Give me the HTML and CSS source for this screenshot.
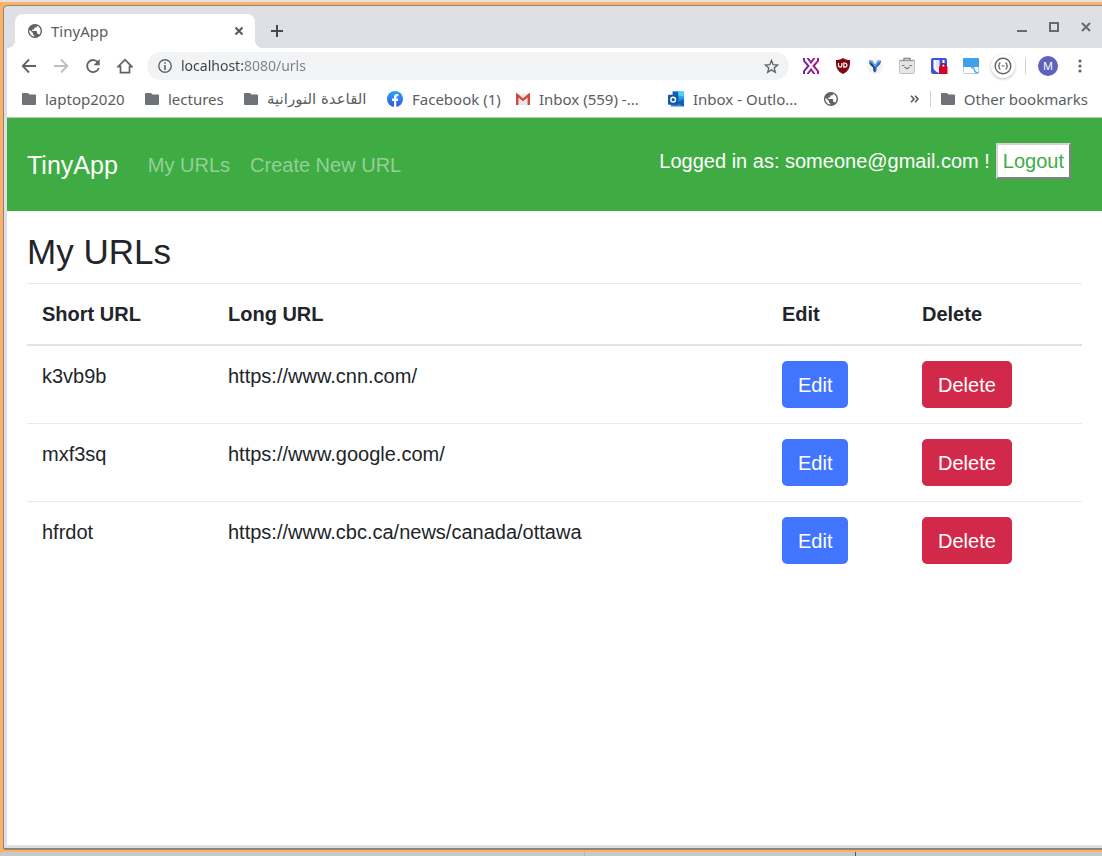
FILE: index.html
```html
<!DOCTYPE html>
<html lang="en">
<head>
<meta charset="utf-8">
<title>TinyApp</title>
<link rel="stylesheet" href="styles.css">
</head>
<body>
<svg class="sprite" aria-hidden="true">
  <symbol id="folder" viewBox="0 0 14 12"><path fill="#6f7377" d="M1 0h5l1.500 1.500H13a1 1 0 0 1 1 1V11a1 1 0 0 1-1 1H1a1 1 0 0 1-1-1V1a1 1 0 0 1 1-1z"/></symbol>
  <symbol id="globe" viewBox="2 2 20 20"><path fill="#5f6368" d="M12 2C6.480 2 2 6.480 2 12s4.480 10 10 10 10-4.480 10-10S17.520 2 12 2zm-1 17.930c-3.950-.49-7-3.850-7-7.930 0-.62.08-1.210.21-1.790L9 15v1c0 1.100.9 2 2 2v1.930zm6.900-2.540c-.26-.81-1-1.390-1.900-1.390h-1v-3c0-.55-.45-1-1-1H8v-2h2c.55 0 1-.45 1-1V7h2c1.100 0 2-.9 2-2v-.41c2.930 1.190 5 4.060 5 7.410 0 2.080-.8 3.970-2.100 5.390z"/></symbol>
</svg>
<div class="desktop">
<div class="frame">
<div class="window">
  <header class="tabstrip">
    <div class="tab">
      <svg width="14" height="14"><use href="#globe"/></svg>
      <span class="tab-title">TinyApp</span>
      <button class="icon-btn tab-close" aria-label="Close tab"><svg width="10" height="10" viewBox="0 0 10 10"><path d="M1.500 1.500l7 7M8.500 1.500l-7 7" stroke="#505357" stroke-width="1.800"/></svg></button>
    </div>
    <button class="icon-btn new-tab" aria-label="New tab"><svg width="14" height="14" viewBox="0 0 14 14"><path d="M7 1v12M1 7h12" stroke="#45484c" stroke-width="2"/></svg></button>
    <div class="window-controls">
      <button class="icon-btn" aria-label="Minimize"><svg width="12" height="12" viewBox="0 0 12 12"><path d="M1 10h10" stroke="#66696e" stroke-width="2"/></svg></button>
      <button class="icon-btn" aria-label="Maximize"><svg width="12" height="12" viewBox="0 0 12 12"><path d="M2 2h8v8H2z" fill="none" stroke="#66696e" stroke-width="2"/></svg></button>
      <button class="icon-btn" aria-label="Close"><svg width="12" height="12" viewBox="0 0 12 12"><path d="M2 2l8 8M10 2l-8 8" stroke="#66696e" stroke-width="2"/></svg></button>
    </div>
  </header>

  <div class="toolbar">
    <button class="icon-btn" aria-label="Back"><svg width="16" height="16" viewBox="0 0 16 16"><path d="M15 8H2M8 1.500 1.700 8 8 14.500" fill="none" stroke="#5f6368" stroke-width="1.800"/></svg></button>
    <button class="icon-btn" aria-label="Forward"><svg width="16" height="16" viewBox="0 0 16 16"><path d="M1 8h13M8 1.500 14.300 8 8 14.500" fill="none" stroke="#bcbec1" stroke-width="1.800"/></svg></button>
    <button class="icon-btn" aria-label="Reload"><svg width="16" height="16" viewBox="0 0 16 16"><path d="M13 4.500A6 6 0 1 0 13.800 10" fill="none" stroke="#5f6368" stroke-width="1.800"/><path d="M14.700 1v6.200H8.500z" fill="#5f6368"/></svg></button>
    <button class="icon-btn" aria-label="Home"><svg width="16" height="16" viewBox="0 0 16 16"><path d="M1.200 8.600 8 1.600l6.800 7h-2.300v6H3.500v-6z" fill="none" stroke="#5f6368" stroke-width="1.700"/></svg></button>
    <div class="address">
      <svg width="14" height="14" viewBox="0 0 14 14"><circle cx="7" cy="7" r="6.200" fill="none" stroke="#5f6368" stroke-width="1.400"/><path d="M7 6v5M7 3.200v1.600" stroke="#5f6368" stroke-width="1.600"/></svg>
      <input class="address-input" type="text" value="localhost:8080/urls" aria-label="Address">
      <button class="icon-btn" aria-label="Bookmark this page"><svg width="15" height="15" viewBox="0 0 16 16"><path d="M8 1.600l1.800 4.500 4.700.3-3.600 3.100 1.200 4.700L8 11.600l-4.100 2.600 1.200-4.700-3.600-3.100 4.700-.3z" fill="none" stroke="#5f6368" stroke-width="1.400"/></svg></button>
    </div>
    <div class="extensions">
      <button class="icon-btn" aria-label="Extension X"><svg width="18" height="18" viewBox="0 0 18 18"><defs><linearGradient id="xg" gradientUnits="userSpaceOnUse" x1="1" x2="17" y1="0" y2="0"><stop stop-color="#6b2aa0"/><stop offset="1" stop-color="#b3127d"/></linearGradient></defs><g fill="url(#xg)"><path d="M1 1h2v2.500L7.800 9 3 14.500V17H1v-3l4-5-4-5zM17 1h-2v2.500L10.200 9l4.800 5.500V17h2v-3l-4-5 4-5z"/><path d="M4.500 1h2.300L9 4l2.200-3h2.300L9 7.300zM4.500 17h2.300L9 14l2.200 3h2.300L9 10.700z"/></g></svg></button>
      <button class="icon-btn" aria-label="Content blocker"><svg width="16" height="16" viewBox="0 0 16 16"><path d="M8 0c2 1.400 4.500 2 7 2 .3 6-.5 11-7 14C1.500 13 .7 8 1 2c2.500 0 5-.6 7-2z" fill="#800610"/><path d="M3.500 5v2.500a1.700 1.700 0 0 0 3.400 0V5M8.800 5v4.200h1a2.100 2.100 0 0 0 0-4.200z" fill="none" stroke="#fff" stroke-width="1.200"/></svg></button>
      <button class="icon-btn" aria-label="Extension Y"><svg class="y-ext" width="16" height="16" viewBox="0 0 16 16"><path d="M2 2.500h3.200L8 6.800l2.800-4.300H14q.2 4-4.300 7L9.500 13 8 14.500 6.500 13l-.2-3.500Q1.800 6.500 2 2.500z" fill="#2f75c4"/><path d="M8 6.800v7.700L6.500 13l-.2-3.500Q3 7.300 2.300 5z" fill="#224b86"/><path d="M3 3.300h1.800L8 8.200l3.200-4.900H13" fill="none" stroke="#86bff0"/></svg></button>
      <button class="icon-btn" aria-label="Clipboard face"><svg width="18" height="18" viewBox="0 0 18 18"><path d="M6 3V1.500h6V3" fill="none" stroke="#8b8b8b" stroke-width="1.600"/><rect x="1.500" y="3.500" width="15" height="13" rx="1" fill="#e6e6e6" stroke="#c2c2c2"/><path d="M1.500 3.500h15" stroke="#9c9c9c" stroke-width="1.400"/><path d="M4 8.500h2.500M11.500 8.500H14M6.500 10 9 11.700l2.500-1.700" fill="none" stroke="#777" stroke-width="1.200"/></svg></button>
      <button class="icon-btn" aria-label="Password manager"><svg width="18" height="18" viewBox="0 0 18 18"><rect x="1" y="1" width="16" height="16" rx="2" fill="#3c55d8"/><path d="M3.500 3h11v7c0 3-2 4-5.500 6-3.500-2-5.500-3-5.500-6z" fill="#fff"/><path d="M5.500 3H9v10.500q-3.500-2-3.500-4z" fill="#dfe6fb"/><path d="M9.500 3h3v9l-3 2z" fill="#3c55d8"/><path d="M11 10V9a2.300 2.300 0 0 1 4.600 0v1" fill="none" stroke="#a00d35" stroke-width="1.600"/><rect x="9" y="9.500" width="8.500" height="7.500" fill="#d8002c"/></svg></button>
      <button class="icon-btn" aria-label="Page layout"><svg width="18" height="18" viewBox="0 0 18 18"><rect x="1.500" y="1.500" width="15" height="15" rx="1" fill="#fff" stroke="#a9d3f5"/><path d="M1 2a1 1 0 0 1 1-1h14a1 1 0 0 1 1 1v8H1z" fill="#3fa0ec"/><path d="M9 10.500q3-.5 3.500 2.500.5 3 4 3" fill="none" stroke="#55abee" stroke-width="1.500"/></svg></button>
      <button class="icon-btn" aria-label="Code extension"><svg class="round-ext" width="24" height="24" viewBox="0 0 24 24"><circle cx="12" cy="12" r="7.800" fill="#fff" stroke="#626262" stroke-width="1.400"/><path d="M9.500 8.800Q8 9 8.300 10.800L7.500 12l.8 1.200Q8 15 9.500 15.200M14.500 8.800q1.500.2 1.200 2l.8 1.200-.8 1.200q.3 1.800-1.200 2M10.500 12h3" fill="none" stroke="#626262" stroke-width="1.200"/></svg></button>
    </div>
    <span class="divider"></span>
    <button class="avatar" aria-label="Profile M">M</button>
    <button class="icon-btn" aria-label="Menu"><svg width="4" height="16" viewBox="0 0 4 16" fill="#5f6368"><circle cx="2" cy="3" r="1.600"/><circle cx="2" cy="8" r="1.600"/><circle cx="2" cy="13" r="1.600"/></svg></button>
  </div>

  <nav class="bookmarks" aria-label="Bookmarks">
    <a href="#" class="bookmark"><svg width="14" height="12"><use href="#folder"/></svg>laptop2020</a>
    <a href="#" class="bookmark"><svg width="14" height="12"><use href="#folder"/></svg>lectures</a>
    <a href="#" class="bookmark"><svg width="14" height="12"><use href="#folder"/></svg><span lang="ar" dir="rtl" class="arabic">القاعدة النورانية</span></a>
    <a href="#" class="bookmark"><svg width="16" height="16" viewBox="0 0 16 16"><defs><linearGradient id="fb" x2="0" y2="1"><stop stop-color="#2aa4f6"/><stop offset="1" stop-color="#3157dc"/></linearGradient></defs><circle cx="8" cy="8" r="8" fill="url(#fb)"/><path d="M7 16v-6H5V7.600h2V6q0-3 2.800-3h1.500v2.200h-1Q9.300 5.200 9.300 6.300v1.300h2L10.900 10H9.300v6z" fill="#fff"/></svg>Facebook (1)</a>
    <a href="#" class="bookmark"><svg width="14" height="12" viewBox="0 0 14 12"><path d="M0 1h14v11H0z" fill="#e9e7e6"/><path d="M1.200 12V2L7 6.800 12.800 2v10" fill="none" stroke="#d04740" stroke-width="2.400"/></svg>Inbox (559) -...</a>
    <a href="#" class="bookmark"><svg width="16" height="16" viewBox="0 0 17 16"><path d="M5 0h12v9H5z" fill="#28a1e7"/><path d="M5 0h6v4H5z" fill="#0e65b5"/><path d="M11 0h6v5h-6z" fill="#50d0fa"/><path d="M3 8h14v8H3z" fill="#2d86d8"/><path d="M17 8v8l-8-4z" fill="#1261b1"/><rect y="3.500" width="11" height="10.500" rx="1" fill="#1853a9"/><circle cx="5.500" cy="8.700" r="2.500" fill="none" stroke="#fff" stroke-width="1.500"/></svg>Inbox - Outlo...</a>
    <a href="#" class="bookmark" aria-label="Untitled bookmark"><svg width="14" height="14"><use href="#globe"/></svg></a>
    <div class="bookmarks-end">
      <button class="icon-btn more" aria-label="More bookmarks"><svg width="9" height="8" viewBox="0 0 9 8"><path d="M1 .8 4 4 1 7.200M5 .8 8 4 5 7.200" fill="none" stroke="#505357" stroke-width="1.500"/></svg></button>
      <span class="divider"></span>
      <a href="#" class="bookmark"><svg width="14" height="12"><use href="#folder"/></svg>Other bookmarks</a>
    </div>
  </nav>

  <div class="page">
    <nav class="navbar">
      <a class="brand" href="#">TinyApp</a>
      <a class="nav-link" href="#">My URLs</a>
      <a class="nav-link" href="#">Create New URL</a>
      <form class="session">
        <span>Logged in as: someone@gmail.com !</span>
        <button class="logout" type="button">Logout</button>
      </form>
    </nav>
    <main class="content">
      <h1 class="title">My URLs</h1>
      <table class="urls">
        <colgroup><col class="col-short"><col><col class="col-edit"><col class="col-delete"></colgroup>
        <thead>
          <tr><th scope="col">Short URL</th><th scope="col">Long URL</th><th scope="col">Edit</th><th scope="col">Delete</th></tr>
        </thead>
        <tbody>
          <tr><td>k3vb9b</td><td>https://www.cnn.com/</td><td><button class="btn btn-edit">Edit</button></td><td><button class="btn btn-delete">Delete</button></td></tr>
          <tr><td>mxf3sq</td><td>https://www.google.com/</td><td><button class="btn btn-edit">Edit</button></td><td><button class="btn btn-delete">Delete</button></td></tr>
          <tr><td>hfrdot</td><td>https://www.cbc.ca/news/canada/ottawa</td><td><button class="btn btn-edit">Edit</button></td><td><button class="btn btn-delete">Delete</button></td></tr>
        </tbody>
      </table>
    </main>
  </div>
</div>
</div>
</div>
</body>
</html>
```
FILE: styles.css
```css
* { box-sizing: border-box; }

body {
  margin: 0;
  font-family: "Noto Sans", "DejaVu Sans", sans-serif;
  font-size: 15px;
  color: #5a5d61;
}

button, input { font: inherit; }
a { color: inherit; text-decoration: none; }
svg { display: block; flex: none; }
.sprite { position: absolute; width: 0; height: 0; }

/* Desktop behind the window, and the window's highlighted frame */
.desktop {
  display: flex;
  min-height: 100vh;
  padding: 2px 0 4px;
  background:
    linear-gradient(#555, #555) 855px 100% / 1px 4px no-repeat,
    linear-gradient(#b5b5b5, #b5b5b5) 584px 100% / 1px 4px no-repeat,
    linear-gradient(#e2e2e2 50%, #c9c9c9 50%);
}

.frame {
  display: flex;
  flex: 1;
  min-width: 0;
  padding: 3px 0 2px 3px;
  background: #fbb266;
}

.window {
  display: flex;
  flex: 1;
  flex-direction: column;
  min-width: 0;
  border: solid #8a8580;
  border-width: 1px 0 2px 1px;
  border-radius: 5px 0 0 3px;
  background: #dfe0e6;
  padding: 0 0 3px 3px;
}

.icon-btn {
  display: flex;
  align-items: center;
  justify-content: center;
  width: 32px;
  height: 28px;
  padding: 0;
  border: 0;
  background: none;
}

/* Tab strip; the radial gradients draw the flared feet of the active tab */
.tabstrip {
  display: flex;
  align-items: flex-end;
  height: 42px;
  padding-left: 8px;
  background:
    radial-gradient(circle at 0 0, transparent 8px, #fff 8px) 0 100% / 8px 8px no-repeat,
    radial-gradient(circle at 100% 0, transparent 8px, #fff 8px) 248px 100% / 8px 8px no-repeat;
}

.tab {
  display: flex;
  align-items: center;
  gap: 9px;
  width: 240px;
  height: 34px;
  padding: 0 6px 0 13px;
  border-radius: 8px 8px 0 0;
  background: #fff;
}

.tab-title { flex: 1; }
.tab-close { width: 20px; }
.new-tab { width: 44px; height: 34px; }
.window-controls { display: flex; align-self: center; margin-left: auto; }

/* Toolbar */
.toolbar {
  display: flex;
  align-items: center;
  height: 36px;
  padding: 0 6px;
  background: #fff;
}

.address {
  display: flex;
  flex: 1;
  align-items: center;
  gap: 9px;
  min-width: 0;
  height: 28px;
  margin: 0 6px;
  padding: 0 2px 0 11px;
  border-radius: 14px;
  background: #f1f3f4;
}

.address-input {
  flex: 1;
  min-width: 0;
  padding: 0;
  border: 0;
  outline: 0;
  font-size: 14px;
  line-height: 20px;
  color: #3c4043;
  /* host name dark, port and path lighter */
  background: linear-gradient(90deg, #3c4043 62px, #7c8084 62px) text;
  -webkit-text-fill-color: transparent;
}

.extensions { display: flex; }
.round-ext { border-radius: 12px; box-shadow: 0 1px 3px #0004; }
.y-ext { border-radius: 8px; background: #f3f3f3; }
.divider { width: 1px; height: 16px; background: #d0d2d5; }

.avatar {
  width: 20px;
  height: 20px;
  margin: 0 6px 0 12px;
  padding: 0;
  border: 0;
  border-radius: 50%;
  background: #5c62bd;
  color: #fff;
  font-size: 11px;
  line-height: 20px;
}

.toolbar > .divider { margin-left: 6px; }

/* Bookmarks bar */
.bookmarks {
  display: grid;
  grid-template-columns: 123px 99px 143px 129px 152px 156px auto 1fr;
  align-items: center;
  height: 34px;
  padding: 0 14px 4px 15px;
  border-bottom: 1px solid #b5c9b6;
  background: #fff;
}

.bookmark {
  display: flex;
  align-items: center;
  gap: 9px;
  line-height: 20px;
  white-space: nowrap;
}

.arabic { font-family: "DejaVu Sans", sans-serif; }
.bookmarks-end { display: flex; align-items: center; justify-content: flex-end; gap: 10px; }
.more { width: 10px; }

/* Page */
.page {
  flex: 1;
  background: #fff;
  color: #212529;
  font-family: "Liberation Sans", Arial, sans-serif;
  font-size: 20px;
  line-height: 30px;
}

.navbar {
  display: flex;
  align-items: center;
  gap: 20px;
  height: 93px;
  padding: 0 31px 0 20px;
  background: #3eac43;
  color: #fff;
}

.brand { margin-right: 10px; font-size: 25px; }
.nav-link { color: #95cf98; }

.session {
  display: flex;
  align-items: center;
  gap: 6px;
  margin: 0 0 8px auto;
}

.logout {
  padding: 1px 5px;
  border: 2px outset #d8d0d4;
  background: #fff;
  color: #3eac43;
}

.content { padding: 20px; }

.title {
  margin: 0 0 10px;
  font-size: 35px;
  font-weight: 400;
  line-height: 42px;
}

.urls {
  width: 100%;
  border-spacing: 0;
  table-layout: fixed;
}

.col-short { width: 186px; }
.col-edit { width: 140px; }
.col-delete { width: 175px; }

.urls th, .urls td {
  padding: 15px;
  border-top: 1px solid #e8e9eb;
  text-align: left;
  vertical-align: top;
}

.urls th { border-bottom: 2px solid #e2e3e7; }
.urls tbody tr:first-child td { border-top: 0; }

.btn {
  display: block;
  height: 47px;
  padding: 0 16px;
  border: 0;
  border-radius: 5px;
  color: #fff;
}

.btn-edit { background: #4175ff; }
.btn-delete { background: #d2294b; }
```
